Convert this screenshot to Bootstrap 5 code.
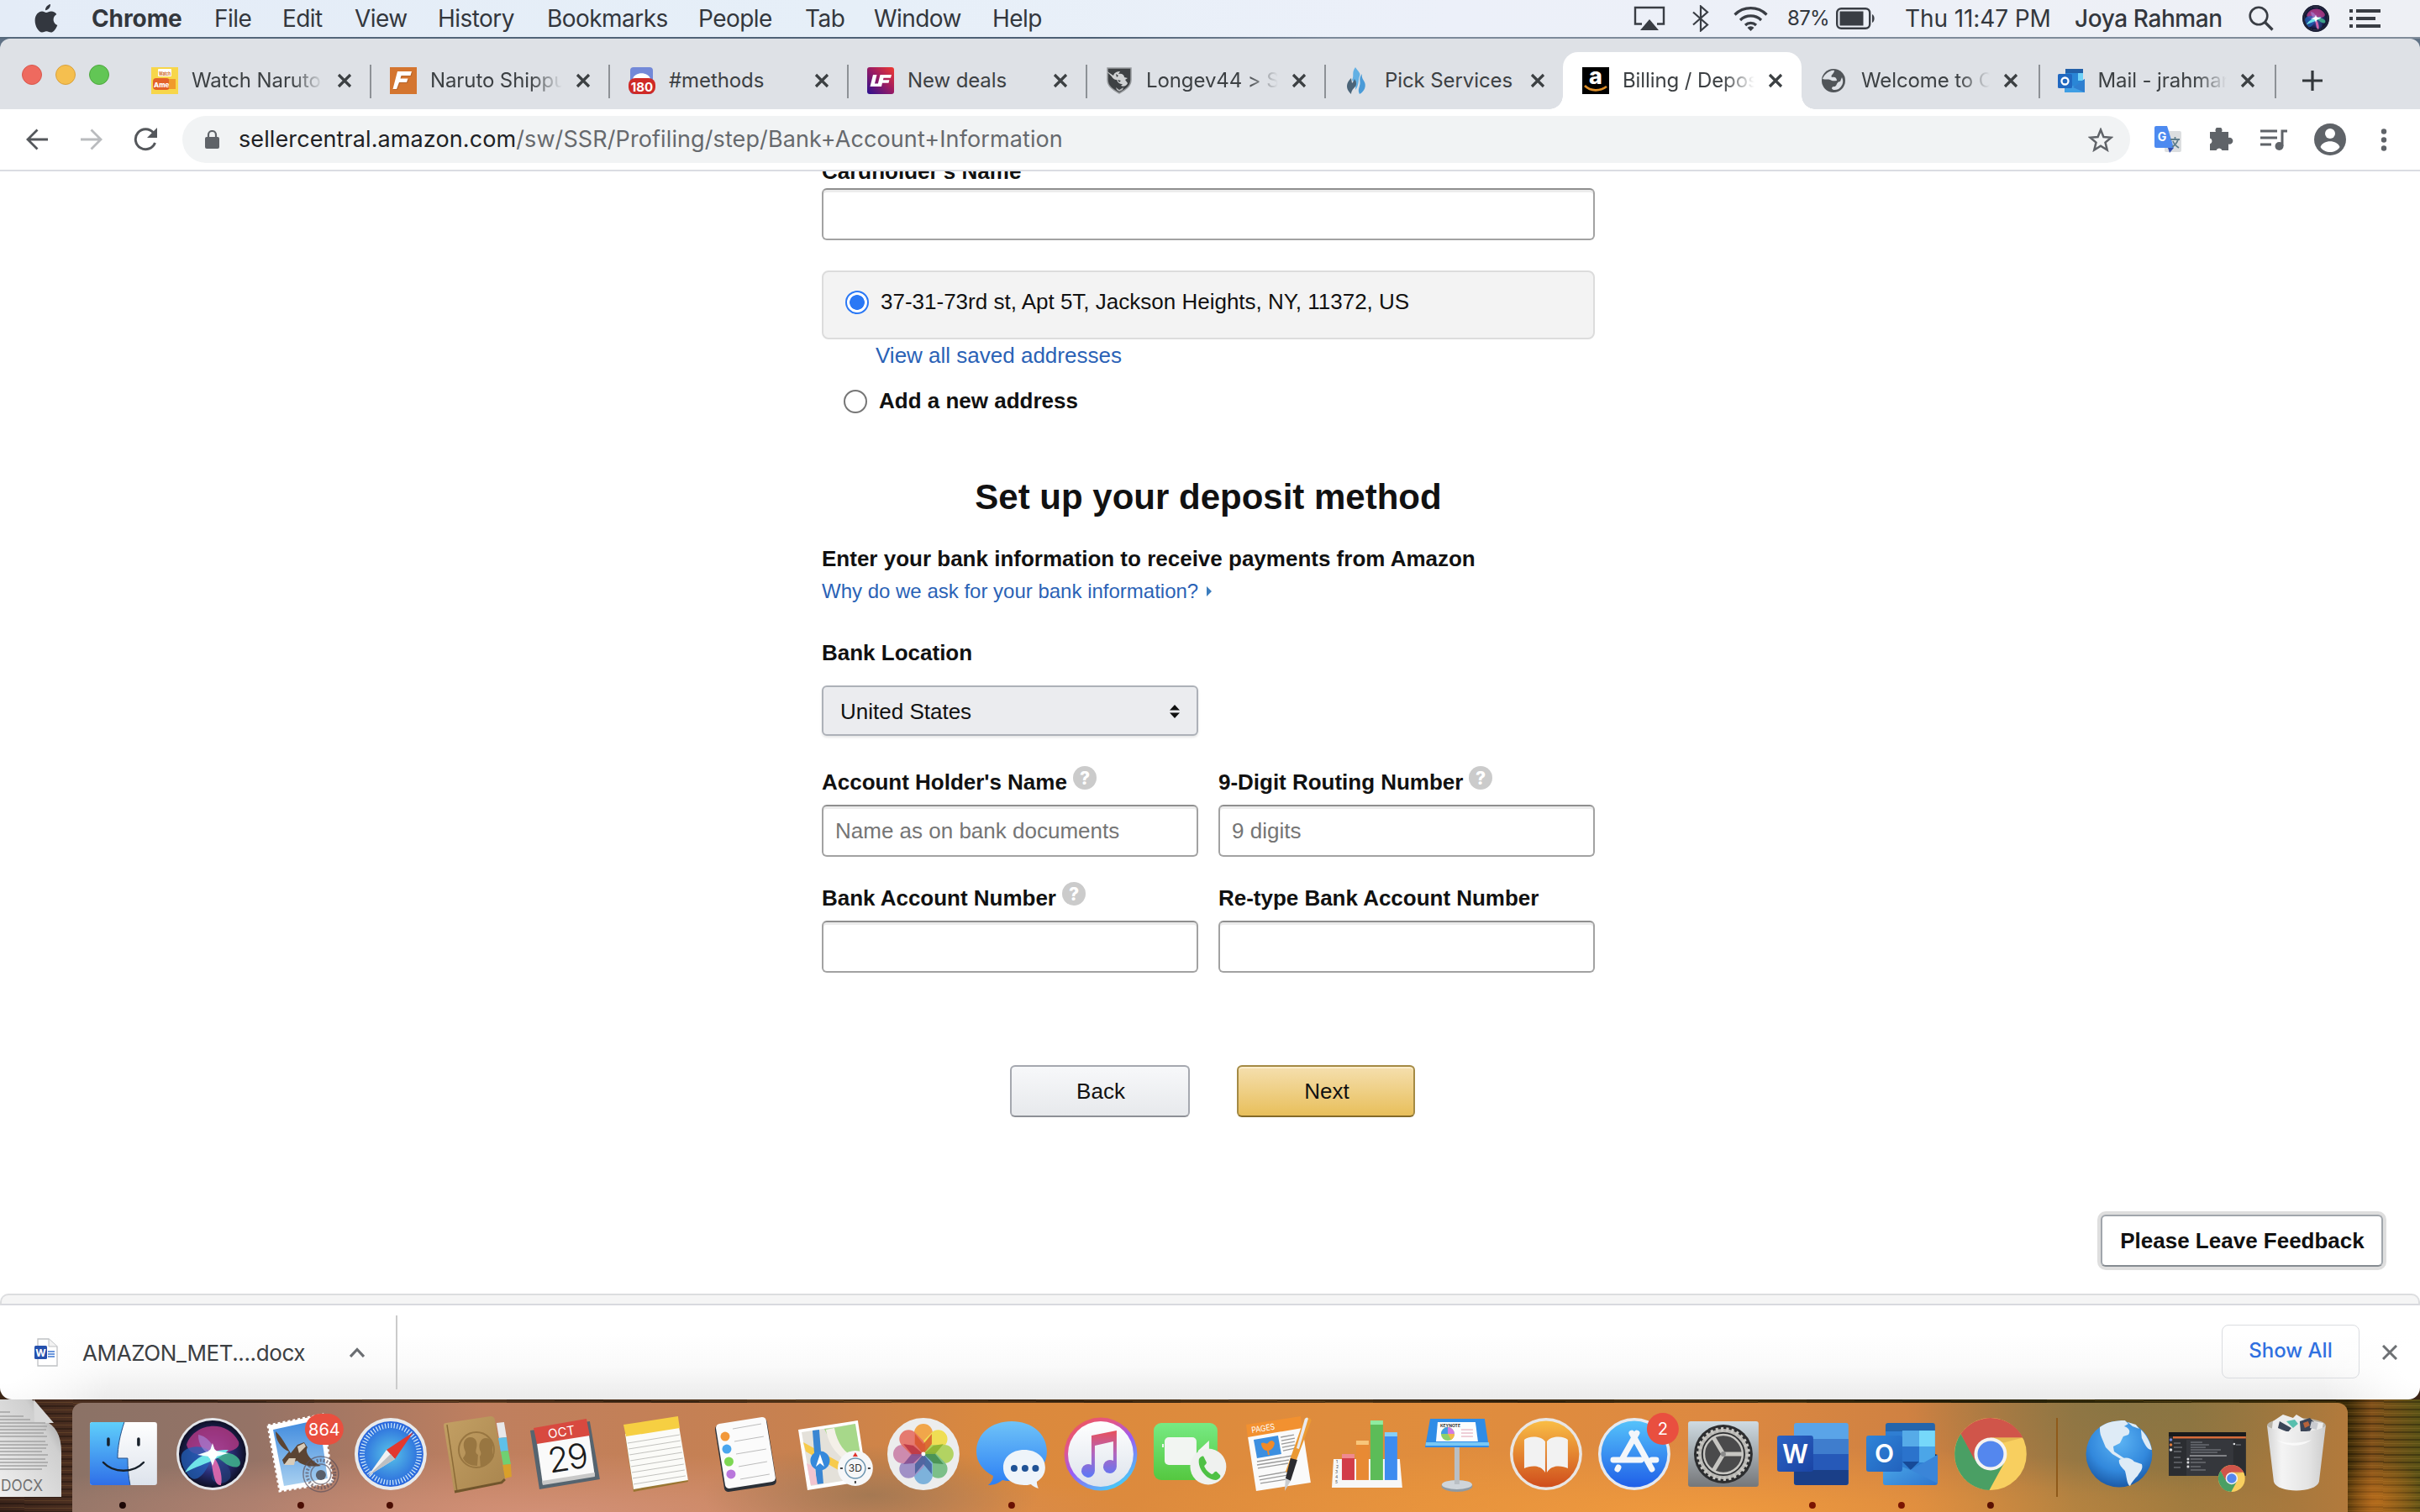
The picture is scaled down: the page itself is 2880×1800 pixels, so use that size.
<!DOCTYPE html>
<html lang="en">
<head>
<meta charset="utf-8">
<title>Billing / Deposit</title>
<link href="https://cdn.jsdelivr.net/npm/bootstrap@5.3.0/dist/css/bootstrap.min.css" rel="stylesheet">
<script src="https://cdn.jsdelivr.net/npm/bootstrap@5.3.0/dist/js/bootstrap.bundle.min.js"></script>
<style>
  body { width: 2880px; height: 1800px; overflow: hidden; background: #2b1a10; font-family: Inter, Roboto, sans-serif; color: #33373d; }
  svg { display: block; flex: none; }

  /* macOS menu bar */
  .menubar { height: 44px; padding-left: 41px; background: linear-gradient(90deg, #e4ecf7, #e6eff8 35%, #ecf0f9 60%, #eef0f5); font-size: 28px; line-height: 44px; letter-spacing: -.55px; white-space: nowrap; align-items: center;
    display: grid; grid-template-columns: 68px 146px 81px 86px 99px 130px 180px 127px 82px 141px 763px 69px 50px 64px 58px 82px 202px 207px 64px 56px 1fr; }
  .menubar .app-name { letter-spacing: -.1px; }
  .menubar .pct { font-size: 24px; letter-spacing: -.7px; }
  .menubar .clock { letter-spacing: -.1px; }
  .menubar .who { font-weight: 500; letter-spacing: -.4px; }
  .menu-edge { height: 2px; background: linear-gradient(90deg, #56697c, #4c5f74 45%, #7c899a 55%, #808c9a); }

  /* Chrome window */
  .strip-base { background: #5f7185; }
  .tabstrip { height: 84px; background: #dee1e6; border-radius: 12px 12px 0 0; }
  .lights { width: 157px; padding: 31px 0 0 26px; gap: 16px; }
  .light { width: 24px; height: 24px; border-radius: 50%; border: 1px solid #d8574c; background: #ee6a5f; }
  .light.amber { background: #f5bf4f; border-color: #d9a13c; }
  .light.green { background: #62c655; border-color: #4da73d; }
  .tab-cell { width: 284px; height: 68px; padding-left: 23px; gap: 16px; position: relative; }
  .tab-cell.slim { width: 281.5px; padding-left: 22px; }
  .tab-cell.slim .tab-title { width: 153px; }
  .tab-title { width: 157px; height: 36px; line-height: 36px; font-size: 24px; letter-spacing: -.1px; white-space: nowrap; overflow: hidden; color: #3c4043; }
  .fade-end { -webkit-mask-image: linear-gradient(90deg, #000 76%, transparent 100%); mask-image: linear-gradient(90deg, #000 76%, transparent 100%); }
  .tab-sep { width: 2px; height: 40px; background: #8d9196; margin-left: auto; margin-right: -1px; margin-top: 2px; }
  .tab-current { background: #fff; border-radius: 18px 18px 0 0; left: -1px; }
  .tab-current::before, .tab-current::after { content: ""; position: absolute; bottom: 0; width: 16px; height: 16px; }
  .tab-current::before { left: -16px; background: radial-gradient(circle at 0 0, transparent 15.5px, #fff 16px); }
  .tab-current::after { right: -16px; background: radial-gradient(circle at 100% 0, transparent 15.5px, #fff 16px); }
  .toolbar-row { height: 74px; background: #fff; border-bottom: 2px solid #dadce2; padding-left: 31px; }
  .nav-ico { margin-left: 37px; }
  .omnibox { width: 2318px; height: 56px; border-radius: 28px; background: #f1f3f4; margin: 0 29px; padding: 0 20px 0 27px; font-size: 27px; letter-spacing: .1px; color: #66696d; }
  .omnibox .host { color: #202124; }
  .url-text { margin-left: 23px; }
  .ext-icons { gap: 32px; }
  .kebab { margin-left: 9px; }

  /* Page */
  .page { height: 1350px; background: #fff; font-family: "Liberation Sans", Arial, sans-serif; font-size: 26px; line-height: 38px; color: #111; overflow: hidden; position: relative; }
  .form-col { width: 920px; margin-left: 978px; margin-top: -19px; }
  .first-label { margin-bottom: 1px; }
  .fld { width: 100%; height: 62px; border: 2px solid #a2a2a2; border-top-color: #8f8f8f; border-radius: 6px; padding: 0 14px; box-shadow: inset 0 3px 0 #ececec; background: #fff; color: #111; display: block; }
  .fld::placeholder { color: #757575; opacity: 1; }
  .addr { height: 82px; margin-top: 36px; border: 2px solid #dcdcdc; border-radius: 8px; background: #f3f3f3; padding: 16px 0 0 26px; gap: 14px; }
  .dot-radio { width: 28px; height: 28px; border: 2px solid #767676; border-radius: 50%; background: #fff; flex: none; margin-top: 1px; }
  .dot-radio.on { margin-top: 6px; border-color: #2a78f5; background: radial-gradient(circle, #2a78f5 8.5px, #fff 9.2px); }
  .alink { color: #2a62b6; text-decoration: none; }
  .view-all { padding-left: 64px; }
  .add-new { margin-top: 16px; padding-left: 26px; gap: 14px; }
  .page h1 { font-size: 42px; line-height: 52px; font-weight: 700; margin: 70px 0 28px; }
  .why { font-size: 24px; margin-top: 1px; gap: 10px; }
  .bank-loc { margin-top: 35px; }
  .country { width: 448px; height: 60px; margin-top: 20px; margin-bottom: 36px; border: 2px solid #adb1b8; border-radius: 6px; background: #ebecef; padding: 2px 20px 0 20px; box-shadow: 0 2px 3px rgba(0,0,0,.1); }
  .pair { gap: 24px; }
  .pair > div { width: 448px; }
  .pair .lbl { height: 38px; margin-bottom: 8px; gap: 7px; letter-spacing: -.02px; }
  .pair.second { margin-top: 30px; }
  .acts { margin: 110px 0 0 224px; gap: 56px; }
  .act { height: 62px; border-radius: 6px; border: 2px solid #a5a8af; border-bottom-color: #8d9096; background: linear-gradient(#f7f8fa, #e7e9ec); color: #111; font-size: 26px; line-height: 56px; text-align: center; padding: 0 0 0 2px; }
  .act.back { width: 214px; }
  .act.next { width: 212px; border-color: #a48a44; border-bottom-color: #846a29; background: linear-gradient(#f5dfae, #e8bf5b); box-shadow: inset 0 2px 0 #fbeccb; }
  .feedback { position: absolute; right: 44px; top: 1242px; width: 336px; height: 62px; border: 2px solid #a0a6ac; border-bottom-color: #858b91; border-radius: 6px; box-shadow: 0 0 0 4px #dedede; line-height: 58px; padding-left: 1px; text-align: center; font-weight: 700; background: #fff; }
  .foot-strip { height: 14px; border: 2px solid #dcdddf; border-bottom-color: #d8d9de; border-radius: 10px 10px 0 0; background: #f5f5f5; }

  /* Download shelf */
  .shelf { height: 112px; border-radius: 0 0 14px 14px; background: radial-gradient(ellipse 140px 120px at 0 50%, #fff 30%, transparent), radial-gradient(ellipse 120px 120px at 100% 60%, #fff 20%, transparent), linear-gradient(#fff 30%, #fafafa 65%, #ebebeb); padding: 0 27px 0 41px; }
  .shelf-name { width: 318px; margin-left: 29px; font-size: 26px; letter-spacing: -.38px; color: #3c4043; }
  .shelf-line { width: 2px; height: 88px; background: #cbcbcb; margin-left: 37px; }
  .show-all { width: 164px; height: 64px; border: 1.5px solid #dadce0; border-radius: 8px; font-size: 24px; font-weight: 500; line-height: 60px; text-align: center; color: #2f70e0; margin-right: 27px; margin-top: -2px; }

  /* Desktop and Dock */
  .page-base { background: #3b2516; }
  .desk { height: 134px; background:
    radial-gradient(ellipse 60px 50px at 2830px 120px, rgba(226,130,30,.55), transparent),
    repeating-linear-gradient(1deg, rgba(0,0,0,.28) 0 2px, transparent 2px 5px, rgba(255,190,90,.12) 5px 6px, transparent 6px 9px),
    linear-gradient(90deg, #3b241a 0, #4a2e20 3%, #4c3015 35%, #402a10 60%, #2a2408 85%, #3c2c08 97%, #80501a 98%, #5a5216 100%); }
  .docfile { width: 86px; height: 134px; }
  .dock { width: 2708px; height: 130px; margin-top: 4px; border-radius: 12px 12px 0 0; padding-left: 7px; background:
    radial-gradient(ellipse 200px 60px at 950px 110px, rgba(150,115,80,.75), transparent),
    radial-gradient(ellipse 260px 110px at 2440px 0, rgba(125,115,70,.55), transparent),
    radial-gradient(ellipse 700px 70px at 560px 130px, rgba(214,148,124,.8), transparent),
    radial-gradient(ellipse 700px 80px at 1950px 130px, rgba(246,160,60,.7), transparent),
    linear-gradient(90deg, #8b7266 0, #957366 8%, #bf7f5f 18%, #c8814f 32%, #db893d 41%, #e08d3d 60%, #dd8941 72%, #cf8142 81%, #9c7842 88%, #95763f 93%, #b27a3c 100%); }
  .dock > svg { width: 105.85px; height: 130px; overflow: visible; }
  .dock-sep { width: 2px; height: 94px; margin: 18px 20px 0 25px; background: #8f5a1a; }
  svg text { font-family: Inter, Roboto, sans-serif; }
</style>
</head>
<body>
<svg width="0" height="0" class="position-absolute">
  <defs>
    <symbol id="cross" viewBox="0 0 18 18"><path d="M2 2l14 14M16 2L2 16" stroke="#3c4043" stroke-width="3.2" fill="none"/></symbol>
    <symbol id="ask" viewBox="0 0 28 28"><circle cx="14" cy="14" r="14" fill="#cbcbcb"/><text x="14" y="21.500" text-anchor="middle" font-size="21" font-weight="800" fill="#fff">?</text></symbol>
    <symbol id="chromeball" viewBox="0 0 86 86">
      <circle cx="43" cy="43" r="43" fill="#f8cf5f"/>
      <path d="M7.500 19A43 43 0 0 1 81.500 23.500H43L24 52.500z" fill="#d0554a"/>
      <path d="M7.500 19A43 43 0 0 0 41.500 86L59 54 24 50z" fill="#4a9f64"/>
      <path d="M43 23.500h38.500l-23 6z" fill="#d8a94a" opacity=".6"/>
      <circle cx="43" cy="43" r="19.500" fill="#f5f3f0"/><circle cx="43" cy="43" r="15.500" fill="#5487ee"/>
    </symbol>
    <radialGradient id="gSiri" cx=".5" cy=".5" r=".5"><stop stop-color="#5a6fd0"/><stop offset=".55" stop-color="#2a2f78"/><stop offset="1" stop-color="#0e1026"/></radialGradient>
    <symbol id="siri" viewBox="0 0 86 86">
      <circle cx="43" cy="43" r="43" fill="#e4e6ea"/><circle cx="43" cy="43" r="40" fill="url(#gSiri)"/>
      <path d="M12 32C20 6 60 0 74 28c4 12-20 14-31 15S16 46 12 32z" fill="#b83a86" opacity=".8"/>
      <path d="M6 44c4-12 30-14 37 0C38 62 24 82 14 68 9 62 4 52 6 44z" fill="#2360b8" opacity=".75"/>
      <path d="M43 42c10-4 34 0 33 13-4 10-24-3-33-13z" fill="#3fae8c" opacity=".9"/>
      <path d="M44 46c10 2 24 14 20 26-6 8-18 8-22 0z" fill="#25407e" opacity=".7"/>
      <path d="M10 65C22 46 40 38 62 38 52 50 30 55 10 65z" fill="#6fe4e8"/>
      <path d="M40 42c10 8 16 26 13 38-9 2-10-22-13-38z" fill="#e66ab0" opacity=".9"/>
      <path d="M26 20c12 2 20 14 20 26C32 42 26 32 26 20z" fill="#a98ae0" opacity=".6"/>
      <path d="M43 30l3 9 16 3-15 4-4 11-4-11-14-2 15-5z" fill="#f4ffff"/>
      <circle cx="43" cy="43" r="6" fill="#fff"/>
    </symbol>
    <linearGradient id="gFinder" x2="0" y2="1"><stop stop-color="#5fcffb"/><stop offset="1" stop-color="#2f6fe8"/></linearGradient>
    <linearGradient id="gPale" x2="0" y2="1"><stop stop-color="#fff"/><stop offset="1" stop-color="#dde3ec"/></linearGradient>
    <linearGradient id="gSky" x2="0" y2="1"><stop stop-color="#3f8ade"/><stop offset="1" stop-color="#a8d0f0"/></linearGradient>
    <radialGradient id="gSaf"><stop stop-color="#58c4e8"/><stop offset="1" stop-color="#2865dc"/></radialGradient>
    <linearGradient id="gMsg" x2="0" y2="1"><stop stop-color="#6fc3f8"/><stop offset="1" stop-color="#2c7ff4"/></linearGradient>
    <linearGradient id="gTune" x2=".6" y2="1"><stop stop-color="#f2564d"/><stop offset=".35" stop-color="#e0568e"/><stop offset=".6" stop-color="#9a5af5"/><stop offset="1" stop-color="#4cc4f8"/></linearGradient>
    <linearGradient id="gNote" x2="0" y2="1"><stop stop-color="#e8505a"/><stop offset=".5" stop-color="#b066c0"/><stop offset="1" stop-color="#5a78f8"/></linearGradient>
    <linearGradient id="gFace" x2="0" y2="1"><stop stop-color="#77ea83"/><stop offset="1" stop-color="#55c840"/></linearGradient>
    <linearGradient id="gBook" x2="0" y2="1"><stop stop-color="#f9bd45"/><stop offset="1" stop-color="#cf4d1c"/></linearGradient>
    <linearGradient id="gStore" x2="0" y2="1"><stop stop-color="#55c2fa"/><stop offset="1" stop-color="#1f5fe8"/></linearGradient>
    <linearGradient id="gSteel" x2="0" y2="1"><stop stop-color="#cfdbe2"/><stop offset="1" stop-color="#75777a"/></linearGradient>
    <linearGradient id="gTile" x2="1" y2="1"><stop stop-color="#2c63c4"/><stop offset="1" stop-color="#1a44a4"/></linearGradient>
    <linearGradient id="gTileO" x2="1" y2="1"><stop stop-color="#2f84d8"/><stop offset="1" stop-color="#2262bd"/></linearGradient>
    <linearGradient id="gEnv" x2="1" y2="1"><stop stop-color="#4fb0ec"/><stop offset="1" stop-color="#2d74cf"/></linearGradient>
    <radialGradient id="gGlobe" cx=".5" cy=".3" r=".7"><stop stop-color="#5cb4f4"/><stop offset=".65" stop-color="#3288dc"/><stop offset="1" stop-color="#1b5ba8"/></radialGradient>
    <linearGradient id="gTan" x2="1" y2="1"><stop stop-color="#c3a064"/><stop offset="1" stop-color="#a9854e"/></linearGradient>
    <linearGradient id="gLF" x1="0" y1="1" x2="1" y2="0"><stop stop-color="#2a1090"/><stop offset=".55" stop-color="#a01c60"/><stop offset="1" stop-color="#f03a30"/></linearGradient>
    <linearGradient id="gBin"><stop stop-color="#d4d4d4"/><stop offset=".25" stop-color="#f4f4f4"/><stop offset=".7" stop-color="#e4e4e4"/><stop offset="1" stop-color="#cdcdcd"/></linearGradient>
    <linearGradient id="gPaper" x1="0" y1="1" x2="1" y2="0"><stop stop-color="#f0f0f0"/><stop offset=".7" stop-color="#cfcfcf"/><stop offset="1" stop-color="#8c8c8c"/></linearGradient>
  </defs>
</svg>

<header class="menubar">
  <svg width="28" height="34" viewBox="0 0 28 34"><path d="M19 0c.3 3.600-2.600 7.200-6 7.200C12.700 4 15.600.6 19 0zM14 10c1.800 0 3.200-1.600 6-1.600 2.700 0 5 1.400 6.300 3.500-5.500 3.200-4.600 10.800 1 13-1.500 4-4.500 8.600-7.600 8.600-2 0-3-1.300-5.400-1.300S11 33.500 9 33.500C5 33.500.6 26.300.6 19.500.6 12.600 5 8.600 9 8.600c2.300 0 3.700 1.400 5 1.400z" fill="#33373f"/></svg>
  <span class="app-name fw-bold">Chrome</span><span>File</span><span>Edit</span><span>View</span><span>History</span><span>Bookmarks</span><span>People</span><span>Tab</span><span>Window</span><span>Help</span>
  <svg width="38" height="30" viewBox="0 0 38 30"><path d="M10 21.500H2V2h34v19.500h-8" fill="none" stroke="#393d44" stroke-width="2.400"/><path d="M19 16l11 13H8z" fill="#393d44"/></svg>
  <svg width="22" height="32" viewBox="0 0 22 32"><path d="M2 8.500l17 15L11 30.500V1.500l8 7-17 15" fill="none" stroke="#393d44" stroke-width="2.200"/></svg>
  <svg width="41" height="30" viewBox="0 0 41 30"><g fill="none" stroke="#393d44" stroke-width="3.200"><path d="M1.500 10.500a27 27 0 0 1 38 0"/><path d="M8 17a18 18 0 0 1 25 0"/><path d="M14 23a9.500 9.500 0 0 1 13 0"/></g><path d="M20.500 30l-4-4a5.600 5.600 0 0 1 8 0z" fill="#393d44"/></svg>
  <span class="pct">87%</span>
  <svg width="46" height="26" viewBox="0 0 46 26"><rect x="1.200" y="1.200" width="39" height="23.600" rx="5" fill="none" stroke="#393d44" stroke-width="2.400"/><rect x="4.500" y="4.500" width="28" height="17" fill="#393d44"/><path d="M43 8c3.500 1.500 3.500 8.500 0 10z" fill="#393d44"/></svg>
  <span class="clock">Thu 11:47 PM</span><span class="who">Joya Rahman</span>
  <svg width="30" height="30" viewBox="0 0 30 30"><circle cx="12" cy="12" r="10.300" fill="none" stroke="#393d44" stroke-width="2.600"/><path d="M19 19l9.500 9.500" stroke="#393d44" stroke-width="3.200"/></svg>
  <svg width="32" height="32" viewBox="0 0 86 86"><circle cx="43" cy="43" r="43" fill="#23263a"/><use href="#siri" x="3" y="3" width="80" height="80"/><circle cx="43" cy="43" r="39" fill="none" stroke="#1d2038" stroke-width="6"/></svg>
  <svg width="37" height="22" viewBox="0 0 37 22"><path d="M0 2h4M0 11h4M0 20h4M8 2h29M8 11h23M8 20h29" stroke="#393d44" stroke-width="3.800"/></svg>
</header>
<div class="menu-edge"></div>

<div class="strip-base"><div class="tabstrip d-flex">
  <div class="lights d-flex flex-shrink-0"><span class="light"></span><span class="light amber"></span><span class="light green"></span></div>
  <nav class="d-flex align-items-end">
    <div class="tab-cell d-flex align-items-center">
      <svg width="32" height="32"><rect width="32" height="32" fill="#f7d64a"/><rect x="8" y="2" width="16" height="9" rx="1" fill="#fff"/><text x="16" y="9.500" font-size="6.500" font-weight="700" fill="#d06a28" text-anchor="middle" textLength="14" lengthAdjust="spacingAndGlyphs">Watch</text><rect x="2" y="13" width="20" height="14" rx="4" fill="#e3622a"/><path d="M21 14h8v12h-8z" fill="#f09a2c"/><text x="3" y="23.500" font-size="8" font-weight="800" fill="#fff">Ame</text></svg>
      <span class="tab-title fade-end">Watch Naruto</span><svg width="18" height="18"><use href="#cross"/></svg><i class="tab-sep"></i>
    </div>
    <div class="tab-cell d-flex align-items-center">
      <svg width="32" height="32"><rect width="32" height="32" fill="#d4752f"/><path d="M10 6h17l-1.500 5H14.500l-1 3.500h9L21 19h-9l-3 8H4z" fill="#9a5526" opacity=".5"/><path d="M9 5h17l-1.500 5H13.500l-1 3.500h9L20 18h-9l-3 8H3.500z" fill="#fff"/></svg>
      <span class="tab-title fade-end">Naruto Shippu</span><svg width="18" height="18"><use href="#cross"/></svg><i class="tab-sep"></i>
    </div>
    <div class="tab-cell d-flex align-items-center">
      <svg width="32" height="32"><rect x="2" width="27" height="32" rx="4" fill="#7389d8"/><path d="M5 14c2-9 19-9 21 0z" fill="#fff"/><rect y="13" width="32" height="19" rx="8" fill="#cf2a27"/><text x="16" y="28.500" font-size="15" font-weight="700" fill="#fff" text-anchor="middle">180</text></svg>
      <span class="tab-title">#methods</span><svg width="18" height="18"><use href="#cross"/></svg><i class="tab-sep"></i>
    </div>
    <div class="tab-cell d-flex align-items-center">
      <svg width="32" height="32"><rect width="32" height="32" rx="3" fill="url(#gLF)"/><path d="M7 9h4.500L9 19.500h5L13 23H3.500zM15.500 9H29l-1 3.800h-8.500l-.6 2.400h7.500l-.9 3.500H18L17 23h-5z" fill="#fff"/></svg>
      <span class="tab-title">New deals</span><svg width="18" height="18"><use href="#cross"/></svg><i class="tab-sep"></i>
    </div>
    <div class="tab-cell d-flex align-items-center">
      <svg width="32" height="32"><path d="M2 1h28v14c0 8-7 12-14 16C9 27 2 23 2 15z" fill="#3e4144" stroke="#989b9e" stroke-width="1.500"/><path d="M0 4l9 6c1-4 5-5 8-5l-2 3c4-1 7 1 7 4l4 1-3 2 3 4c-1 3-5 5-8 3l2-2c-4 0-6-2-7-5-3 0-5-2-6-4z" fill="#d0d2d4"/><path d="M12 8l3 2-2 2zM14 15l4 1-2 2z" fill="#3e4144"/><path d="M12 24l4 3 5-3-1 3-4 2-3-2z" fill="#b4b6b8"/></svg>
      <span class="tab-title fade-end">Longev44 &gt; S</span><svg width="18" height="18"><use href="#cross"/></svg><i class="tab-sep"></i>
    </div>
    <div class="tab-cell d-flex align-items-center">
      <svg width="32" height="32"><path d="M13 0c-5 7-1 10-4 15 2 3 5 6 4 12 5-6 3-12 5-16S16 5 13 0z" fill="#62b0e4"/><path d="M21 8c-5 6-1 9-3 14-1 4-2 6 0 10 6-3 8-10 6-14s-4-6-3-10z" fill="#4a9bd8"/><path d="M8 13C3 18 2 22 4 27c1 2 2 3 4 5 0-6 6-8 6-12s-1-4-2-6c-1 3-2 4-3 5z" fill="#4b6478"/></svg>
      <span class="tab-title">Pick Services</span><svg width="18" height="18"><use href="#cross"/></svg>
    </div>
    <div class="tab-cell tab-current d-flex align-items-center">
      <svg width="32" height="32"><rect width="32" height="32" fill="#000"/><text x="16" y="20" font-size="27" font-weight="800" fill="#fff" text-anchor="middle">a</text><path d="M3 22c7 7 18 7 26 1" stroke="#e0902a" stroke-width="2.600" fill="none"/></svg>
      <span class="tab-title fade-end">Billing / Depos</span><svg width="18" height="18"><use href="#cross"/></svg>
    </div>
    <div class="tab-cell slim d-flex align-items-center">
      <svg width="32" height="32"><circle cx="15" cy="16" r="14" fill="#515559"/><path d="M6 8c3-3 8-5 10-4 0 4-5 5-3 8 3-1 6 0 6 4-3 0-5 1-8-1-2-1-6 0-9-1 1-3 2-4 4-6zM25 12c3 6 0 11-4 14-4 2-8 1-8-1 1-3 3-1 5-3 1-2 2-5 5-5z" fill="#dee1e6"/></svg>
      <span class="tab-title fade-end">Welcome to C</span><svg width="18" height="18"><use href="#cross"/></svg><i class="tab-sep"></i>
    </div>
    <div class="tab-cell slim d-flex align-items-center">
      <svg width="32" height="32"><path d="M9 2h21v26H9z" fill="#2a86d6"/><path d="M9 2h21v5H9z" fill="#2260a8"/><path d="M24 7h6v9h-6z" fill="#6fd2f8"/><path d="M8 19l12 4 12-9v16H8z" fill="#3f9ee4"/><path d="M18 24l14-10v16z" fill="#2f7fd0"/><rect y="8" width="17" height="17" rx="1.500" fill="#2168c0"/><circle cx="8.500" cy="16.500" r="4" fill="none" stroke="#fff" stroke-width="2.300"/></svg>
      <span class="tab-title fade-end">Mail - jrahman</span><svg width="18" height="18"><use href="#cross"/></svg><i class="tab-sep"></i>
    </div>
    <div class="tab-cell d-flex align-items-center ps-4 ms-2">
      <svg width="24" height="24"><path d="M12 0v24M0 12h24" stroke="#33373b" stroke-width="3.200"/></svg>
    </div>
  </nav>
</div></div>

<div class="toolbar-row d-flex align-items-center">
  <svg width="27" height="26" viewBox="0 0 27 26"><path d="M26 13H2M13.500 1.500L2 13l11.500 11.500" fill="none" stroke="#54575b" stroke-width="2.800"/></svg>
  <svg class="nav-ico" width="27" height="26" viewBox="0 0 27 26"><path d="M1 13h24M13.500 1.500L25 13 13.500 24.500" fill="none" stroke="#b9bbbe" stroke-width="2.800"/></svg>
  <svg class="nav-ico" width="29" height="28" viewBox="0 0 29 28"><path d="M23.500 6A12 12 0 1 0 25.500 18" fill="none" stroke="#54575b" stroke-width="3"/><path d="M28 0v12H16z" fill="#54575b"/></svg>
  <div class="omnibox d-flex align-items-center">
    <svg width="17" height="22" viewBox="0 0 17 22"><rect y="8" width="17" height="14" rx="2" fill="#5f6368"/><path d="M4 9V5.500a4.500 4.500 0 0 1 9 0V9" fill="none" stroke="#5f6368" stroke-width="2.200"/></svg>
    <span class="url-text"><span class="host">sellercentral.amazon.com</span>/sw/SSR/Profiling/step/Bank+Account+Information</span>
    <svg class="ms-auto" width="30" height="29" viewBox="0 0 30 29"><path d="M15 2.500l3.400 8.500 9.100.7-7 5.900 2.200 8.900L15 21.700l-7.700 4.800 2.200-8.900-7-5.900 9.100-.7z" fill="none" stroke="#5f6368" stroke-width="2.500"/></svg>
  </div>
  <div class="ext-icons d-flex align-items-center">
    <svg width="32" height="32" viewBox="0 0 32 32"><rect x="12" y="6" width="20" height="25" rx="2" fill="#dcdee0"/><path d="M0 2q0-2 2-2h13l8 26H2q-2 0-2-2z" fill="#4d8af0"/><path d="M16 26h7l-5 6z" fill="#3450b0"/><text x="9" y="18" text-anchor="middle" font-size="14" font-weight="700" fill="#fff">G</text><path d="M19 16h11M24.500 13v3M28 16c-1 4-4 7-7 9M22 18c1 3 4 6 7 8" stroke="#607d8b" stroke-width="1.800" fill="none"/></svg>
    <svg width="30" height="28" viewBox="0 0 30 28"><path d="M2 5h7a4 4 0 1 1 7 0h8v7a4 4 0 1 1 0 7.500V27h-7.500a3.700 3.700 0 0 0-7 0H2v-7.500a3.700 3.700 0 0 0 0-7z" fill="#5f6368"/></svg>
    <svg width="32" height="25" viewBox="0 0 32 25"><path d="M0 2h20M0 10h20M0 18h13" stroke="#5f6368" stroke-width="3"/><path d="M26 20V2h6" fill="none" stroke="#5f6368" stroke-width="3"/><circle cx="22.500" cy="20" r="5" fill="#5f6368"/></svg>
    <svg width="38" height="38" viewBox="0 0 38 38"><circle cx="19" cy="19" r="19" fill="#5f6368"/><circle cx="19" cy="12" r="6" fill="#fff"/><path d="M7.500 28c3-9 20-9 23 0-5 8-18 8-23 0z" fill="#fff"/></svg>
    <svg class="kebab" width="8" height="27" viewBox="0 0 8 27"><g fill="#5f6368"><circle cx="4" cy="3.500" r="3.200"/><circle cx="4" cy="13.500" r="3.200"/><circle cx="4" cy="23.500" r="3.200"/></g></svg>
  </div>
</div>

<main class="page d-flex flex-column">
  <div class="form-col">
    <label class="first-label d-block fw-bold">Cardholder's Name</label>
    <input class="fld" aria-label="Cardholder's Name">
    <div class="addr d-flex align-items-start"><span class="dot-radio on"></span><span>37-31-73rd st, Apt 5T, Jackson Heights, NY, 11372, US</span></div>
    <a class="alink view-all d-block">View all saved addresses</a>
    <div class="add-new d-flex align-items-center fw-bold"><span class="dot-radio"></span>Add a new address</div>
    <h1 class="text-center">Set up your deposit method</h1>
    <div class="fw-bold">Enter your bank information to receive payments from Amazon</div>
    <a class="alink why d-flex align-items-center">Why do we ask for your bank information?<svg width="6" height="12"><path d="M0 0l6 6-6 6z" fill="#3a7cbd"/></svg></a>
    <div class="fw-bold bank-loc">Bank Location</div>
    <div class="country d-flex align-items-center justify-content-between"><span>United States</span><svg width="12" height="16"><path d="M6 0l6 6.500H0zM0 9.500h12L6 16z" fill="#111"/></svg></div>
    <div class="pair d-flex">
      <div><div class="lbl d-flex fw-bold">Account Holder's Name<svg width="28" height="28"><use href="#ask"/></svg></div><input class="fld" placeholder="Name as on bank documents"></div>
      <div><div class="lbl d-flex fw-bold">9-Digit Routing Number<svg width="28" height="28"><use href="#ask"/></svg></div><input class="fld" placeholder="9 digits"></div>
    </div>
    <div class="pair second d-flex">
      <div><div class="lbl d-flex fw-bold">Bank Account Number<svg width="28" height="28"><use href="#ask"/></svg></div><input class="fld" aria-label="Bank Account Number"></div>
      <div><div class="lbl d-flex fw-bold">Re-type Bank Account Number</div><input class="fld" aria-label="Re-type Bank Account Number"></div>
    </div>
    <div class="acts d-flex"><button class="act back">Back</button><button class="act next">Next</button></div>
  </div>
  <div class="feedback">Please Leave Feedback</div>
  <div class="foot-strip mt-auto"></div>
</main>

<div class="page-base">
  <div class="shelf d-flex align-items-center">
    <svg width="28" height="34" viewBox="0 0 28 34"><path d="M4 1h13l10 9v23H4z" fill="#fff" stroke="#bfc1c4" stroke-width="1.300"/><path d="M17 1v9h10" fill="#f2f2f2" stroke="#bfc1c4"/><path d="M16 16h8M16 19h8M16 22h8" stroke="#3b74cf" stroke-width="1.500"/><rect y="9" width="15" height="16" rx="1.500" fill="#2550ad"/><text x="7.500" y="21.500" font-size="12" font-weight="700" fill="#fff" text-anchor="middle">W</text></svg>
    <span class="shelf-name">AMAZON_MET....docx</span>
    <svg width="18" height="12" viewBox="0 0 18 12"><path d="M1 11l8-8.500 8 8.500" fill="none" stroke="#6b6e72" stroke-width="3.200"/></svg>
    <i class="shelf-line"></i>
    <div class="show-all ms-auto">Show All</div>
    <svg width="18" height="18" viewBox="0 0 18 18"><path d="M1 1l16 16M17 1L1 17" stroke="#6d7073" stroke-width="3"/></svg>
  </div>
</div>

<footer class="desk d-flex align-items-start">
  <svg class="docfile" viewBox="0 0 86 134">
    <path d="M0 0h38c8 6 6 18 14 25 14 5 21 18 21 38v53H0z" fill="url(#gPaper)"/>
    <path d="M40 0l24 28H41z" fill="#d9d9d9"/>
    <g stroke="#a3a3a3" stroke-width="1.600"><path d="M0 15h12M0 20h28M0 24h36M0 28h54M0 32h56M0 36h55M0 40h52M0 44h56M0 50h54M0 54h57M0 58h55M0 62h50M0 66h57M0 71h54M0 75h57M0 79h56M0 83h50"/></g>
    <text x="1" y="109" font-size="19" fill="#707070" textLength="50" lengthAdjust="spacingAndGlyphs">DOCX</text>
  </svg>
  <div class="dock d-flex">
    <!-- Finder -->
    <svg viewBox="-53 0 106 130"><rect x="-39" y="23" width="80" height="75" rx="3" fill="url(#gPale)"/><path d="M-36 23H2C-3 38-6 52-6 66H6c0 12 1 22 3 32h-45q-3 0-3-3V26q0-3 3-3z" fill="url(#gFinder)"/><path d="M2 23C-3 38-6 52-6 66H6c0 12 1 22 3 32" fill="none" stroke="#254f86" stroke-width="1"/><path d="M-17 43v7M19 43v7" stroke="#17202a" stroke-width="3.500" stroke-linecap="round"/><path d="M-23 71c12 13 36 13 48 0" fill="none" stroke="#17202a" stroke-width="2.500" stroke-linecap="round"/><circle cx="0" cy="122" r="4" fill="#1c0806"/></svg>
    <!-- Siri -->
    <svg viewBox="-53 0 106 130"><use href="#siri" x="-42" y="18" width="86" height="86"/></svg>
    <!-- Mail -->
    <svg viewBox="-53 0 106 130"><path d="M-39 27L26 14 38 95l-63 10z" fill="#fff" stroke="#fff" stroke-width="3" stroke-dasharray="3 3"/><path d="M-33 32L22 20 32 90l-52 9z" fill="url(#gSky)"/><path d="M-30 34c7 6 12 16 18 26l8-10 8-3 4 6c-4 6 4 16 16 22-12 2-24-1-28-6l-16 4-2-5 8-10c-10-4-16-14-16-24z" fill="#5b4433"/><path d="M-4 52l8-4 2 4-8 8zM-14 66l8 0-2 8-12 0z" fill="#d8ccba"/><g fill="none" stroke="#5b4f5a" opacity=".65"><circle cx="24" cy="85" r="21" stroke-width="1.500"/><circle cx="24" cy="85" r="12" stroke-width="1.500"/><circle cx="24" cy="85" r="16.500" stroke-width="4" stroke-dasharray="2 2"/></g><circle cx="24" cy="86" r="6" fill="#59606c"/><rect x="5" y="13" width="46" height="37" rx="18.500" fill="#e94f3f"/><text x="28" y="38.500" font-size="20" fill="#fff" text-anchor="middle">864</text><circle cx="0" cy="122" r="4" fill="#4a0d02"/></svg>
    <!-- Safari -->
    <svg viewBox="-53 0 106 130"><circle cx="1" cy="61" r="43" fill="#e8eaec"/><circle cx="1" cy="61" r="39" fill="url(#gSaf)"/><circle cx="1" cy="61" r="34" fill="none" stroke="#d4ecfa" stroke-width="6" stroke-dasharray="1.200 2.360"/><path d="M28 35L6 67-4 56z" fill="#e2382f"/><path d="M-26 87L-4 56 6 67z" fill="#f2f2f2"/><path d="M-26 87L1 61 6 67z" fill="#bdbfc2"/><circle cx="0" cy="122" r="4" fill="#4a0d02"/></svg>
    <!-- Contacts -->
    <svg viewBox="-53 0 106 130"><path d="M22 24l9-1 3 18-9 1z" fill="#e8e8ea"/><path d="M24 42l10-1 2 16-9 1z" fill="#5fc0e8"/><path d="M27 58l9-1 3 16-9 1z" fill="#6fd072"/><path d="M29 74l10-1 1 15-8 2z" fill="#d9a02a"/><path d="M-41 27q0-3 3-3l53-8q4 0 5 4l12 70q0 4-4 5l-52 12q-4 0-5-4z" fill="url(#gTan)"/><path d="M-37 26l12 80" stroke="#8c6b38" stroke-width="1.500"/><path d="M-28 106l56-11 4-4" fill="none" stroke="#71552c" stroke-width="3"/><circle cx="-2" cy="56" r="21" fill="none" stroke="#987641" stroke-width="2"/><path d="M-18 66c3-4 4-6 2-10-3-8 0-15 7-15 6 0 9 6 7 13-1 4-1 6 2 8l-1 13c-8 0-14-3-17-9zM3 76l-1-12c2-3 2-4 0-8-2-8 2-14 7-14 7 0 9 6 8 14 0 4 0 6 2 7-2 7-8 12-16 13z" fill="#987641"/></svg>
    <!-- Calendar -->
    <svg viewBox="-53 0 106 130"><path d="M-44 33L27 22l12 69-72 12z" fill="#56646f"/><path d="M-36 48L26 38l7 49-62 10z" fill="#fafafa"/><path d="M-30 93l63-10v5l-62 10z" fill="#c9c9c9"/><path d="M-40 30L23 19l4 20-63 10z" fill="#d8493f"/><g transform="translate(-6 40) rotate(-9)"><text font-size="15" fill="#fff" text-anchor="middle">OCT</text><text x="3" y="41" font-size="41" font-weight="300" fill="#1c1c1c" text-anchor="middle" textLength="48">29</text></g></svg>
    <!-- Notes -->
    <svg viewBox="-53 0 106 130"><path d="M-37 39L27 29l11 65-65 12z" fill="#9a7632"/><path d="M-37 37L27 27l11 65-65 11z" fill="#fbfbf8"/><path d="M-39 26L26 16l2 14-64 10z" fill="#f6cf42"/><g stroke="#c2c2be" stroke-width="1"><path d="M-34 48l62-10M-33 55l62-10M-32 62l62-10M-31 69l62-10M-30 76l62-10M-29 83l62-10M-28 90l62-10M-27 97l62-10"/></g></svg>
    <!-- Reminders -->
    <svg viewBox="-53 0 106 130"><path d="M-36 32q0-5 4-5l52-9q5 0 6 5l11 70q0 4-4 5l-53 8q-4 0-5-4z" fill="#2b3037"/><path d="M-35 30q0-4 4-5l51-8q4 0 5 4l11 68q0 4-4 5l-51 8q-4 0-5-4z" fill="#fbfbfb"/><circle cx="-24" cy="40" r="5.500" fill="#f2983a"/><circle cx="-22" cy="55" r="5.500" fill="#4aa6ee"/><circle cx="-19.500" cy="70" r="5.500" fill="#7dd753"/><circle cx="-17" cy="85" r="5.500" fill="#b977dc"/><path d="M-15 31l34-6M-13 46l35-6M-11 61l36-6M-8 76l34-6M-6 91l35-6" stroke="#bcbcbc"/></svg>
    <!-- Maps -->
    <svg viewBox="-53 0 106 130"><path d="M-43 32L28 21l11 72-71 11z" fill="#fff"/><path d="M-39 35l64-10 10 64-63 10z" fill="#e4e1da"/><path d="M-2 30l27-5 7 42C14 62-4 50-12 31z" fill="#a7d88a"/><path d="M-10 32l10-2c4 22 16 34 31 36l2 12C10 70-6 56-10 32z" fill="#f4f0e8"/><path d="M-37 47l62 34 1 11-60-34z" fill="#f7cb4c"/><path d="M-26 33l8-1 5 64-8 1z" fill="#3a86d2"/><path d="M-33 72l9 4 4 21-8 1z" fill="#f2c4cf"/><circle cx="-17" cy="69" r="11.500" fill="#3589dc"/><path d="M-17 61l5 15-5-4-5 4z" fill="#fff"/><circle cx="25" cy="78" r="21" fill="#f6f7f8"/><circle cx="25" cy="78" r="12" fill="none" stroke="#6c95b0" stroke-width="1.500"/><text x="25" y="82.500" font-size="12" fill="#333" text-anchor="middle">3D</text><path d="M25 59l3 5h-6z" fill="#e0352b"/><path d="M7 78h3M40 78h3M25 93v3" stroke="#444" stroke-width="2"/></svg>
    <!-- Photos -->
    <svg viewBox="-53 0 106 130"><circle cy="61" r="43" fill="#eceded"/><g transform="translate(0 61)"><g opacity=".85"><rect x="-11" y="-36" width="22" height="35" rx="11" fill="#f29a2e"/><rect x="-11" y="-36" width="22" height="35" rx="11" fill="#f0dc3a" transform="rotate(45)"/><rect x="-11" y="-36" width="22" height="35" rx="11" fill="#a9cf4a" transform="rotate(90)"/><rect x="-11" y="-36" width="22" height="35" rx="11" fill="#69b878" transform="rotate(135)"/><rect x="-11" y="-36" width="22" height="35" rx="11" fill="#6aa8d8" transform="rotate(180)"/><rect x="-11" y="-36" width="22" height="35" rx="11" fill="#9381c0" transform="rotate(225)"/><rect x="-11" y="-36" width="22" height="35" rx="11" fill="#c87aa4" transform="rotate(270)"/><rect x="-11" y="-36" width="22" height="35" rx="11" fill="#e2584a" transform="rotate(315)" opacity=".9"/></g><g opacity=".8"><path d="M0 0L-10-12V-24L0-12 10-24v12z" fill="#d8542a"/><path d="M0 0L12-10 24-12 14 0z" fill="#8ab02a"/><path d="M0 0L-12-10-24-12-14 0z" fill="#b83040"/><path d="M0 0L14 0 24 12 12 11z" fill="#3f8a4a"/><path d="M0 0L-14 0-24 12-12 11z" fill="#7a4a90"/><path d="M0 0L-10 12V24L0 12 10 24V12z" fill="#3f5c98"/></g><circle r="2.500" fill="#fff"/></g></svg>
    <!-- Messages -->
    <svg viewBox="-53 0 106 130"><path d="M0 22c24 0 42 15 42 36S24 93 0 93c-4 0-8 0-11-1-5 4-10 6-17 6 4-3 6-7 6-11-12-6-20-16-20-29C-42 37-24 22 0 22z" fill="url(#gMsg)"/><path d="M15 56c15 0 25 9 25 21 0 8-4 13-10 17 0 3 1 6 2 8-4-1-7-3-9-5-3 1-5 1-8 1-15 0-25-9-25-21s10-21 25-21z" fill="#eef4fa"/><g fill="#1f5296"><circle cx="3" cy="78" r="4"/><circle cx="16" cy="78" r="4"/><circle cx="28.500" cy="78" r="4"/></g><circle cx="0" cy="122" r="4" fill="#6a1002"/></svg>
    <!-- iTunes -->
    <svg viewBox="-53 0 106 130"><circle cy="61" r="43.500" fill="url(#gTune)"/><circle cy="61" r="39" fill="url(#gPale)"/><path d="M-11 39l30-6v43a8 8 0 1 1-4-7V46l-22 5v30a8 8 0 1 1-4-7z" fill="url(#gNote)"/></svg>
    <!-- FaceTime -->
    <svg viewBox="-53 0 106 130"><rect x="-43" y="24" width="76" height="68" rx="9" fill="url(#gFace)"/><rect x="-30" y="41" width="38" height="33" rx="5" fill="#f2f5f2"/><path d="M10 57l13-12v22H10zM-33 49h2v4h-2z" fill="#f2f5f2"/><circle cx="22" cy="76" r="21.500" fill="#eff1ef"/><path d="M11 67c2-3 5-5 6-2l3 6c0 3-4 3-2 6 2 4 5 6 8 8 3 0 3-4 6-3l4 4c2 2-2 6-5 6-11 0-22-14-20-25z" fill="#4fc145"/></svg>
    <!-- Pages -->
    <svg viewBox="-53 0 106 130"><path d="M-37 40L28 29l10 66-65 10z" fill="#fafafa"/><path d="M-39 26L26 16l2 14-65 11z" fill="#f29130"/><g transform="translate(-32 36) rotate(-9)"><text font-size="10" fill="#fff" textLength="28" lengthAdjust="spacingAndGlyphs">PAGES</text></g><path d="M-30 44l29-5 4 22-29 5z" fill="#3c8fe0"/><path d="M-21 48c4-2 6 2 8 0 3-4 6-4 8 0-1 6-4 8-7 9l1 5-2 0-1-5c-4 0-7-4-7-9z" fill="#f08a28"/><g stroke="#9a9a9a" stroke-width="1.300"><path d="M2 41l16-3M3 45l16-3M3 49l16-3M4 53l15-3M5 57l14-3M-26 70l42-7M-26 74l38-6M-25 78l36-6M-24 88l34-6M-23 92l34-6M-22 96l32-5"/></g><path d="M30 20q2-4 6-2t2 5L15 84l-7-2z" fill="#eb9a34"/><path d="M31 19q3-3 4 0L24 55l-3-1z" fill="#e8eaf0"/><path d="M14 66l8 2-8 25-6-3z" fill="#2c2c30"/><path d="M8 90l6 3-7 12z" fill="#c9ccd0"/></svg>
    <!-- Numbers -->
    <svg viewBox="-53 0 106 130"><path d="M-41 67h79l3 34h-84z" fill="#f7f7f7"/><path d="M-31 65h15v27h-15z" fill="#d23c48"/><path d="M-31 61h15v5h-15z" fill="#f08a90"/><path d="M-14 49H1v43h-15z" fill="#e88a34"/><path d="M-14 45H1v5h-15z" fill="#f8c67a"/><path d="M3 25h15v67H3z" fill="#5cbc58"/><path d="M3 21h15v5H3z" fill="#8eeca0"/><path d="M20 39h15v53H20z" fill="#3d8cf0"/><path d="M20 35h15v5H20z" fill="#86cff8"/><g font-size="5" fill="#555"><text x="-38" y="72">1</text><text x="-38" y="78">2</text><text x="-39" y="84">3</text><text x="-39" y="90">4</text><text x="-39" y="96">5</text></g></svg>
    <!-- Keynote -->
    <svg viewBox="-53 0 106 130"><ellipse cy="99" rx="18.500" ry="7" fill="#8f9aa3"/><ellipse cy="97.500" rx="18" ry="5.500" fill="#cfd5da"/><path d="M-3 53h6v44h-6z" fill="#b9bfc4"/><path d="M-32 19h65l5 34h-76z" fill="#2f8ce6"/><path d="M-37 47H38l.5 4h-76z" fill="#79c8f5"/><path d="M-23 23h45l3 23h-50z" fill="#fdfdfd"/><text x="-20" y="29" font-size="5" font-weight="700" fill="#333" textLength="24" lengthAdjust="spacingAndGlyphs">KEYNOTE</text><circle cx="-11" cy="37" r="8" fill="#8ed06a"/><path d="M-11 37v-8a8 8 0 0 0-8 8z" fill="#3f9be8"/><path d="M-11 37v-8a8 8 0 0 1 8 8z" fill="#d27ae0"/><path d="M-11 37h8a8 8 0 0 1-4 7z" fill="#f2b84a"/><path d="M5 32h14M5 36h14M5 40h14" stroke="#e0a0b0" stroke-width="1"/></svg>
    <!-- Books -->
    <svg viewBox="-53 0 106 130"><circle cy="61" r="43" fill="#e9e6e4"/><circle cy="61" r="39.500" fill="url(#gBook)"/><path d="M-1 46c-5-7-20-7-25-2v34c7-3 19-5 25 5zM1 46c5-7 20-7 25-2v34c-7-3-19-5-25 5z" fill="#f2f2f2"/></svg>
    <!-- App Store -->
    <svg viewBox="-53 0 106 130"><circle cy="61" r="43" fill="#e6e9ee"/><circle cy="61" r="39.500" fill="url(#gStore)"/><g stroke="#f3f6fa" stroke-width="7" stroke-linecap="round"><path d="M3 36L-14 66M-19 77l-1 2M-3 36L21 79M-25 68H8M21 68h5"/></g><circle cx="34" cy="31" r="19" fill="#e94f3f"/><text x="34" y="38" font-size="20" fill="#fff" text-anchor="middle">2</text></svg>
    <!-- System Preferences -->
    <svg viewBox="-53 0 106 130"><rect x="-42" y="22" width="84" height="78" rx="3" fill="url(#gSteel)"/><circle cy="61" r="35" fill="#2c2d2f"/><circle cy="61" r="28" fill="none" stroke="#b6b5b1" stroke-width="4"/><circle cy="61" r="23" fill="#4a4a4b" stroke="#c7c6c2" stroke-width="2.500"/><circle cy="61" r="29.500" fill="none" stroke="#c7c6c2" stroke-width="5" stroke-dasharray="3 3.180"/><path d="M0 61h23M0 61l-12-20M0 61l-12 20" stroke="#c7c6c2" stroke-width="5"/><circle cy="61" r="3" fill="#8a8a8a"/></svg>
    <!-- Word -->
    <svg viewBox="-53 0 106 130"><rect x="-22" y="24" width="65" height="74" rx="3" fill="#5aa4e8"/><path d="M-22 43h65v18h-65z" fill="#3f7dcd"/><path d="M-22 61h65v19h-65z" fill="#2659b8"/><path d="M-22 80h65v15q0 3-3 3h-59q-3 0-3-3z" fill="#1a3f88"/><rect x="-42" y="39" width="43" height="43" rx="3" fill="url(#gTile)"/><text x="-20.500" y="72" font-size="31" font-weight="600" fill="#fff" text-anchor="middle" textLength="31" lengthAdjust="spacingAndGlyphs">W</text><circle cx="0" cy="122" r="4" fill="#7a1402"/></svg>
    <!-- Outlook -->
    <svg viewBox="-53 0 106 130"><path d="M30 58l13 4v6H30z" fill="#14305e"/><path d="M-19 33h59v50h-59z" fill="#2f7ed2"/><path d="M-19 27q0-3 3-3h53q3 0 3 3v7h-59z" fill="#2465ac"/><path d="M1 33h20v19H1z" fill="#56abe8"/><path d="M21 33h19v19H21z" fill="#76d8fa"/><path d="M21 52h19v19H21z" fill="#4ba6e8"/><path d="M1 52h20v18H1z" fill="#2b73cc"/><path d="M1 70h20l-10 10z" fill="#174a98"/><path d="M-22 68l33 12 32-18v33q0 3-3 3h-59q-3 0-3-3z" fill="url(#gEnv)"/><path d="M11 80l32-18v34z" fill="#3a85d8"/><rect x="-42" y="39" width="43" height="43" rx="3" fill="url(#gTileO)"/><text x="-20.500" y="71.500" font-size="30" font-weight="600" fill="#fff" text-anchor="middle">O</text><circle cx="0" cy="122" r="4" fill="#7a1402"/></svg>
    <!-- Chrome -->
    <svg viewBox="-53 0 106 130"><use href="#chromeball" x="-43" y="18" width="86" height="86"/><circle cx="0" cy="122" r="4" fill="#5a1002"/></svg>
    <i class="dock-sep"></i>
    <!-- Globe -->
    <svg viewBox="-53 0 106 130"><circle cy="61" r="39.500" fill="url(#gGlobe)"/><path d="M-23 29c8-6 18-8 30-8l4 4-5 3c6 2 8 6 5 10l-6 2-4 8-8 4 1 6 6 4 6 4-4 1-10-6-8-8-5-12c-2-4-2-9-2-12z" fill="#deebf6"/><path d="M0 68c6-4 14-3 18 2l9 3c2 6-2 9-5 14-3 3-6 6-9 12-4-2-4-12-6-18-4-4-8-8-7-13z" fill="#deebf6"/><path d="M26 32c6 6 11 14 13 24-6 0-9-8-12-14zM10 23l10 3 4 5-8-3z" fill="#deebf6"/></svg>
    <!-- Minimised window -->
    <svg viewBox="-53 0 106 130"><rect x="-46" y="35" width="92" height="52" fill="#2b2d31"/><path d="M-46 35h92v5h-92z" fill="#191a1c"/><path d="M-41 40h87v2.500h-87z" fill="#d56b3a"/><path d="M-25 44h56v43h-56z" fill="#35373c"/><g stroke="#85888e" stroke-width="1"><path d="M-20 47h14M-20 50h22M-20 53h18M-20 56h36M-20 59h32M-20 67h14M-20 71h18M-20 76h12M-20 80h18M-40 48h8M-40 53h10M-40 58h9M-40 65h8M-40 71h10M-40 77h8M34 50h6"/></g><path d="M-21 63h44" stroke="#cfd0d2"/><g fill="#dadbdd"><circle cx="-23" cy="67" r="1.500"/><circle cx="-23" cy="71" r="1.500"/><circle cx="-23" cy="76" r="1.500"/><circle cx="32" cy="49" r="1.300"/><circle cx="-43.500" cy="44" r="1.800" fill="#7289da"/><circle cx="-43.500" cy="50" r="1.800" fill="#e07a3a"/><circle cx="-43.500" cy="56" r="1.800"/></g><use href="#chromeball" x="13" y="74" width="32" height="32"/></svg>
    <!-- Trash -->
    <svg viewBox="-53 0 106 130"><ellipse cy="27" rx="35" ry="9" fill="#b9b4aa"/><path d="M-28 22l12-8 12 4 4-4 10 6 10 2 12 2-2 12-60 2z" fill="#ececec"/><path d="M-20 22l14 8-4 5-12-5zM4 22l12-4 6 6-6 10H5z" fill="#3b4557"/><path d="M-12 22l10-2 4 5-6 5z" fill="#59bfae"/><path d="M8 24l6-2 2 5-6 3z" fill="#b8633a"/><path d="M18 22l8 2-2 8-8-2z" fill="#c9cbd0"/><path d="M-35 27c8 10 62 10 70 0l-8 67c-4 14-50 14-54 0z" fill="url(#gBin)"/><path d="M-24 44c12 6 30 4 42 0-10 8-26 10-42 0z" fill="#fff" opacity=".7"/></svg>
  </div>
</footer>
</body>
</html>
